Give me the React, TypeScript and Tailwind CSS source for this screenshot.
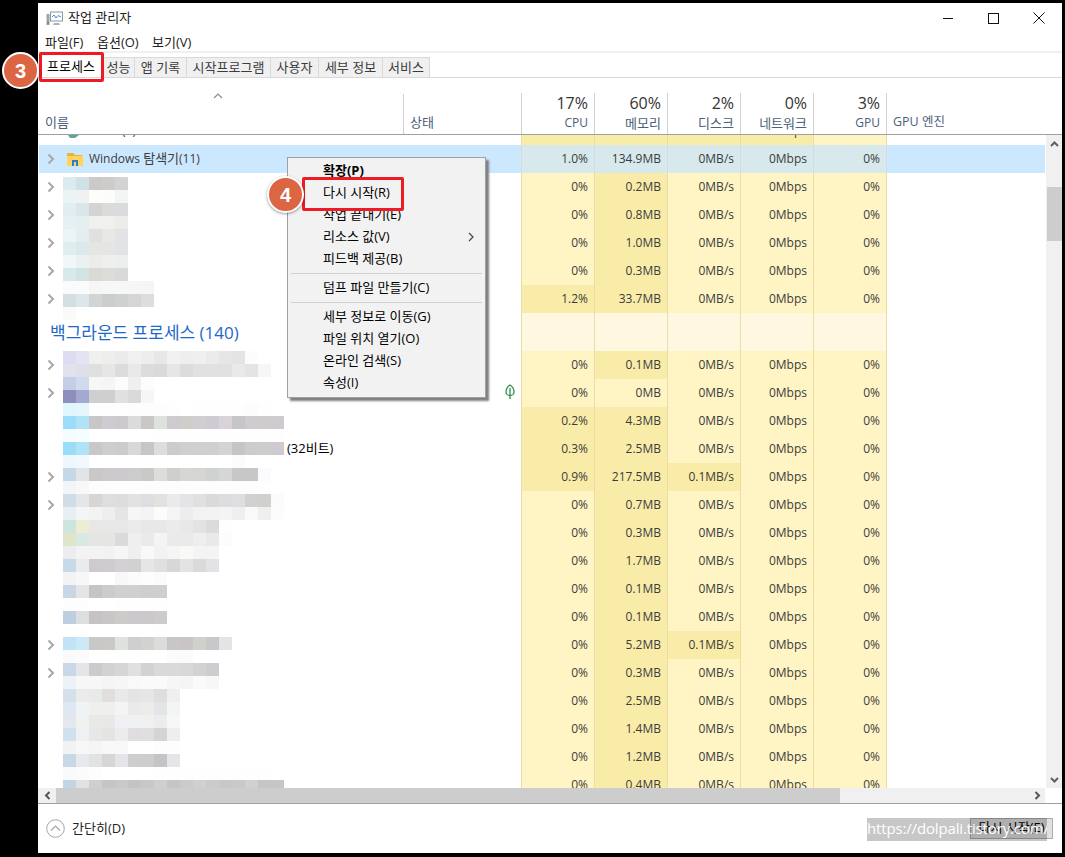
import React from "react";

type Row = {
  cpu: string;
  mem: string;
  disk?: string;
  arrow?: boolean;
  hotCpu?: boolean;
  hotDisk?: boolean;
  note?: string;
};

const topRows: Row[] = [
  { cpu: "0%", mem: "0.2MB", arrow: true },
  { cpu: "0%", mem: "0.8MB", arrow: true },
  { cpu: "0%", mem: "1.0MB", arrow: true },
  { cpu: "0%", mem: "0.3MB", arrow: true },
  { cpu: "1.2%", mem: "33.7MB", arrow: true, hotCpu: true },
];

const bgRows: Row[] = [
  { cpu: "0%", mem: "0.1MB", arrow: true },
  { cpu: "0%", mem: "0MB", arrow: true },
  { cpu: "0.2%", mem: "4.3MB", hotCpu: true },
  { cpu: "0.3%", mem: "2.5MB", hotCpu: true, note: "(32비트)" },
  { cpu: "0.9%", mem: "217.5MB", disk: "0.1MB/s", arrow: true, hotCpu: true, hotDisk: true },
  { cpu: "0%", mem: "0.7MB", arrow: true },
  { cpu: "0%", mem: "0.3MB" },
  { cpu: "0%", mem: "1.7MB" },
  { cpu: "0%", mem: "0.1MB" },
  { cpu: "0%", mem: "0.1MB" },
  { cpu: "0%", mem: "5.2MB", disk: "0.1MB/s", arrow: true, hotDisk: true },
  { cpu: "0%", mem: "0.3MB", arrow: true },
  { cpu: "0%", mem: "2.5MB" },
  { cpu: "0%", mem: "1.4MB" },
  { cpu: "0%", mem: "1.2MB" },
  { cpu: "0%", mem: "0.4MB" },
];

// 가려진 프로세스 이름 (모자이크)
const mosaicTop = [
  "#dcebef #cfe2e6 #cbcac8 #cdccc9 #d2d3d5",
  "#ebf4f4 #eff2f1 #fdfdfc #fcfcfa #f3f5f4",
  "#e0eef1 #d9e7e9 #d4d4d4 #dcdbd8 #dadbdd",
  "#e4f1f3 #e5efed #f0f0ee #f0f1ef #ecedeb",
  "#ebf4f6 #e4eef0 #e0e0e0 #e8e8e5 #e2e3e6",
  "#deeeee #dde8ea #e5e5e2 #e5e5e3 #e2e3e5",
  "#f1f7f7 #ebf1f3 #ecece9 #efefee #edeef0",
  "#d8e9ec #d2e3e3 #dad9d6 #dcdcd9 #d8d9db",
  "#fbfbfb #fbfbfb #f6f6f6 #f7f7f7 #f7f7f7 #f6f6f6 #f5f5f5",
  "#d5dee0 #dde6ea #d2d5d5 #cbcccc #cfd0d0 #d4d5d5 #dcdddc",
  "#fafafa",
];

const mosaicBottom = [
  "#dcdcf2 #e3e3f3 #f0f0ee #eeeeec #ebebeb #f0f0f0 #ededed #e7e7e7 #f1f1f1 #eeeeee #f0f0f0 #ebebeb #e6e6e6 #e4e4e2 #fbfcfb",
  "#e2e2ec #dfdfe9 #dfdfdf #e6e6e4 #dcdcdc #e9e9e9 #dcdcdc #dadada #e6e6e6 #dcdcdf #e1e1e1 #e0e1e0 #e0e2e2 #e9e9e9 #e4e4e2 #f6f6f6",
  "#c2cfe4 #cfdbea #f7f7f7 #f5f5f5 #fcfcfc #efefef #fcfcfc",
  "#8e8fbd #a5a9d1 #d0cfcf #cfcfd1 #dfe0df #dadad9 #f6f6f6",
  "#e0f6fd #e5f7fd #fefefe #fefefe #fefefe #fdfdfd #fdfdfd #fdfdfd #fefefe #ffffff #fefefe #fefefe #fefefe #fefefe #fcfcfc #fefefe",
  "#9bdcf8 #aee4f6 #c9c6c8 #cfcbd0 #cdc9cc #dcdbdb #c9c8c5 #dfe1df #cecacf #cfcecb #d0ced0 #cfcbd3 #d7d3d6 #c6c5c8 #cfcbd0 #cecccc #cfcacf",
  "#f3fcff #f6fdff #ffffff #ffffff #ffffff #ffffff #ffffff #fefefe #fefefe #fefefe #fefefe #fefefe #fefefe #fefefe #fefefe #fefefe #fefefe",
  "#9bdcf8 #aee4f6 #c9c7c8 #cfcdd0 #cecbcd #d9d8d8 #c8c6c4 #dcdedc #cecbcf #d0cfcc #d1cfd1 #d1ced2 #d6d4d2 #c6c5c6 #cfcbcd #cecccc #cfcacf",
  "#edf7fd #f2f9fe #ffffff #ffffff #ffffff #ffffff #ffffff #ffffff #ffffff #ffffff #ffffff #ffffff #ffffff #fcfcfc",
  "#c6d7e5 #e3e4e6 #cbc9c8 #cccacb #cccacc #cdcbcc #c9c9c8 #dddddc #cfcfce #d6d6d5 #d5d6d4 #cfd2d1 #d5d6d7 #c7c7c7 #c7c7c7 #fafbfd",
  "#f3f6f8 #f7f8f8 #fdfdfd #fdfdfd #fdfdfd #fdfdfd #fdfdfd #fdfdfd #fdfdfd #fdfdfd #fdfdfd #fdfdfd #fdfdfd #fdfdfd #fdfdfd #fefefe",
  "#cfdde8 #e4e6e8 #d8d5d5 #dfdede #dddddc #e3e1e1 #dcdee1 #e2e2df #eaeaea #e2e4e8 #e2dfdf #dcd9d9 #dddde0 #dcdee0 #d2d1d0 #d0d0cd #fafbfd",
  "#e7eef4 #f3f6f6 #f3f3f3 #eeeeee #e5e5e5 #f6f6f6 #f4f4f4 #fcfcfc #f5f5f5 #ededed #f2f2f2 #f2f3f3 #f3f4f3 #efefef #f9f9f9 #efefed #fcfcfc",
  "#cde5de #ecedd2 #e8e7e5 #e7e7e6 #e7e7e6 #ebebeb #e7e8e7 #e8e8e8 #ebebeb #e8e8e8 #e3e3e3 #dbdbdb #fdfefd",
  "#dfe5cb #d8e9e4 #e5e5e5 #e5e5e3 #dadada #efeff1 #e9ebea #f4f4f4 #eaeaea #e9ebea #eeeeee #e9e9e9 #fcfcfc",
  "#ebedef #f3f3f3 #f3f3f3 #f2f2f2 #f6f6f6 #efefef #f9f9f9 #f2f2f2 #f4f6f5 #f9f9f6 #f4f4f4 #f4f4f4",
  "#c8dae9 #e9ebee #cecbce #cfcccf #d3d1d3 #d2d1d2 #e6e6e6 #e0e0e0 #d8d6d8 #e3e3e3 #dadada #e2e3e6",
  "#f3f3f3 #f7f7f7 #ffffff #ffffff #f8f8f8 #fbfbfb #fdfdfd #fbfbfb",
  "#c7d7e4 #e3e5e8 #c7c4c5 #cdcbcb #d2cfd0 #d1cfd2 #cfcdcf #d0ced2",
  "#fdfdfd #fdfdfd #ffffff #ffffff #fefefe #fefefe #fefefe #fefefe",
  "#bccee0 #dcdee0 #c6c3c4 #c9c7c6 #cdcaca #cbc9cb #cbc9cb #cdcbcb",
  "#ffffff #ffffff #ffffff #ffffff #ffffff #ffffff #ffffff #fefefe",
  "#c2e3f5 #cde9f6 #cac8c6 #cbc8c8 #dee2df #cdd0cf #d2d2d0 #dcdcd8 #c7c7c7 #c8c4c8 #d1d0cc #c8c8cb #e4e4e6",
  "#fafafa #fbfbfb #ffffff #ffffff #ffffff #ffffff #ffffff #ffffff #fbfbfb #fbfbfb",
  "#c8d8e6 #e3e5e9 #cdcacb #d4d1d5 #d7d6d7 #e0e0e0 #d2d2d4 #d9d9d9 #d9d9d9 #d9d8d6 #d2d2d2 #cccdd0",
  "#edf2f6 #f6f7f7 #f7f7f7 #f5f5f5 #f6f6f6 #f9f9f9 #fafafa #fafafa #f6f6f4 #f4f6f6 #fafafa #f7f7f7",
  "#d6e0ea #ebebeb #e8eaea #e0dfdd #e9e9e9 #e6e3e5 #e6e6e6 #dedede #eef0ef",
  "#dee8f2 #f0f3f5 #efefed #efefed #f4f4f4 #eaeaea #ecece9 #e3e4e7 #f3f5f4",
  "#e2e8ed #f0f2f0 #e9e9e9 #e8e9e6 #eff0f3 #eff0f2 #f0f0f0 #ececec #f7f7f7",
  "#cfe0ee #eef0f3 #e7e7e7 #e4e4e2 #ececec #dfdde0 #dfdfdf #d4d4d4 #ecefee",
  "#f2f2f2 #f7f7f7 #f5f5f3 #f8f8f8 #f8f8f8 #ffffff #ffffff #fdfdfd #fdfdfd",
  "#c8d8e6 #e7e9ed #e0e3e1 #d6d6d4 #e4e5ea #cfcdd0 #cdcdcd #c4c4c6 #e3e5e7",
  "#fafafa #fbfbfb #fdfdfd #ffffff #ffffff #ffffff #ffffff #fefefe #fefefe #fefefe #fefefe #fefefe #fefefe #fefefe #fefefe #fefefe",
  "#c3d4e2 #dfe3e2 #cfcfcf #c5c5c7 #c9c9c9 #c4c4c4 #c8c8cb #d0cfca #c5c5c7 #cbcbcb #cfd0d3 #cdc9cd #c9c8c8 #c9c9c9 #cfd0d2 #c6c6c6 #c6c6c6",
];

const tabs = [
  { label: "성능", w: "w-[32px]" },
  { label: "앱 기록", w: "w-[52px]" },
  { label: "시작프로그램", w: "w-[84px]" },
  { label: "사용자", w: "w-[48px]" },
  { label: "세부 정보", w: "w-[64px]" },
  { label: "서비스", w: "w-[47px]" },
];

const headCols = [
  { pct: "17%", label: "CPU", size: "text-[12px]" },
  { pct: "60%", label: "메모리", size: "text-[13px]" },
  { pct: "2%", label: "디스크", size: "text-[13px]" },
  { pct: "0%", label: "네트워크", size: "text-[13px]" },
  { pct: "3%", label: "GPU", size: "text-[12px]" },
];

const Chevron = () => (
  <svg width="8" height="12" viewBox="0 0 8 12" className="shrink-0">
    <path d="M1.5 1.5 L6 6 L1.5 10.5" fill="none" stroke="#a8a8a8" strokeWidth="2" />
  </svg>
);

const Mosaic = ({ rows, className }: { rows: string[]; className: string }) => (
  <div className={`absolute left-[25px] flex flex-col ${className}`}>
    {rows.map((row, i) => (
      <div key={i} className="flex h-[13px]">
        {row.split(" ").map((c, j) => (
          <div key={j} className="w-[13px] h-[13px]" style={{ backgroundColor: c }} />
        ))}
      </div>
    ))}
  </div>
);

const Cell = ({ text, hot, first }: { text: string; hot?: boolean; first?: boolean }) => (
  <div
    className={`${first ? "w-[74px] border-l" : "w-[73px]"} border-r border-[#eedca6] flex items-center justify-end pr-[6px] ${
      hot ? "bg-[#f9eca8]" : "bg-[#fff4c4]"
    }`}
  >
    {text}
  </div>
);

const ProcRow = ({ row }: { row: Row }) => (
  <div className="flex h-7 shrink-0">
    <div className="w-[482px] flex items-center pl-[8px] relative">
      {row.arrow && <Chevron />}
      {row.note && <span className="absolute left-[248px] text-[13px] text-black">{row.note}</span>}
    </div>
    <Cell first text={row.cpu} hot={row.hotCpu} />
    <Cell text={row.mem} hot={row.mem !== "0MB"} />
    <Cell text={row.disk ?? "0MB/s"} hot={row.hotDisk} />
    <Cell text="0Mbps" />
    <Cell text="0%" />
  </div>
);

const MenuItem = ({ label, bold, more }: { label: string; bold?: boolean; more?: boolean }) => (
  <div className={`h-[22px] flex items-center pl-[35px] pr-[11px] justify-between ${bold ? "font-bold" : ""}`}>
    <span>{label}</span>
    {more && (
      <svg width="6" height="10" viewBox="0 0 6 10">
        <path d="M1 1 L5 5 L1 9" fill="none" stroke="#444" strokeWidth="1.2" />
      </svg>
    )}
  </div>
);

const MenuLine = () => <div className="h-px bg-[#d0d0d0] mx-[3px] my-[3px]" />;

const Badge = ({ n, className }: { n: string; className: string }) => (
  <div
    className={`absolute w-[37px] h-[37px] rounded-full bg-[#dc6644] border-[2px] border-white shadow-[0_1px_3px_#00000066] flex items-center justify-center text-white text-[20px] font-bold font-['Liberation_Sans',sans-serif] ${className}`}
  >
    {n}
  </div>
);

export default function App() {
  return (
    <div className="relative w-[1065px] h-[857px] overflow-hidden bg-black pt-[3px] pl-[38px] pr-[3px] pb-[4px] text-[12px] text-[#3c3c3c] font-['Open_Sans','Noto_Sans_CJK_KR',sans-serif]">
      <div className="h-full bg-white flex flex-col overflow-hidden">
        {/* 제목 표시줄 */}
        <div className="h-[29px] shrink-0 flex items-center pl-[8px] pt-[1px] text-[#222]">
          <svg width="17" height="15" viewBox="0 0 17 15" className="shrink-0">
            <rect x="0.5" y="3" width="3" height="11" fill="#9aa5a5" />
            <rect x="1" y="11" width="2" height="1.5" fill="#5a9a3c" />
            <rect x="4.5" y="1" width="12" height="9" fill="#fff" stroke="#8a96a0" />
            <path d="M6 6 L8 4 L10 7 L12 4.5 L15 6" fill="none" stroke="#3f93d2" strokeWidth="1" />
            <path d="M8 12 H13 L14 14 H7 Z" fill="#a8b2b8" />
          </svg>
          <span className="ml-[5px] text-[13px]">작업 관리자</span>
          <div className="ml-auto flex items-center">
            <svg width="11" height="11" viewBox="0 0 11 11" className="mr-[34px]">
              <path d="M0 5.5 H10" stroke="#111" />
            </svg>
            <svg width="11" height="11" viewBox="0 0 11 11" className="mr-[34px]">
              <rect x="0.5" y="0.5" width="10" height="10" fill="none" stroke="#111" />
            </svg>
            <svg width="12" height="12" viewBox="0 0 12 12" className="mr-[17px]">
              <path d="M0.5 0.5 L11.5 11.5 M11.5 0.5 L0.5 11.5" stroke="#111" />
            </svg>
          </div>
        </div>

        {/* 메뉴 */}
        <div className="h-[19px] shrink-0 flex items-center pl-[7px] pt-[3px] text-[13px] text-[#222]">
          <span className="w-[52px]">파일(F)</span>
          <span className="w-[55px]">옵션(O)</span>
          <span>보기(V)</span>
        </div>
        <div className="h-[2px] shrink-0 bg-[#f0f0f0]" />

        {/* 탭 */}
        <div className="h-[25px] shrink-0 pt-[4px] flex items-stretch border-b border-[#d9d9d9] pl-[1px] text-[13px]">
          <div className="w-[64px] bg-white flex items-center justify-center text-black">프로세스</div>
          {tabs.map((t) => (
            <div
              key={t.label}
              className={`${t.w} bg-[#f0f0f0] border-t border-r border-[#d9d9d9] flex items-center justify-center`}
            >
              {t.label}
            </div>
          ))}
        </div>

        {/* 표 머리글 */}
        <div className="h-[57px] shrink-0 flex border-b border-[#a0a0a0] pl-px pr-[16px] text-[#4c607a]">
          <div className="w-[364px] relative pt-[35px] pl-[6px] text-[13px]">
            <svg width="10" height="6" viewBox="0 0 10 6" className="absolute left-[174px] top-[15px]">
              <path d="M1 5 L5 1 L9 5" fill="none" stroke="#8c8c8c" strokeWidth="1.2" />
            </svg>
            이름
          </div>
          <div className="w-[118px] mt-[16px] border-l border-[#d0d0d0] pl-[6px] pt-[19px] text-[13px]">상태</div>
          {headCols.map((c, i) => (
            <div
              key={c.label}
              className={`${i === 0 ? "w-[74px] border-l" : "w-[73px]"} mt-[15px] border-r border-[#d0d0d0] flex flex-col items-end pr-[6px]`}
            >
              <span className="text-[16px] leading-[20px] text-[#333]">{c.pct}</span>
              <span className={`${c.size} leading-[18px] mt-[1px]`}>{c.label}</span>
            </div>
          ))}
          <div className="flex-1 pl-[6px] pt-[35px] text-[12.5px]">GPU 엔진</div>
        </div>

        {/* 표 본문 */}
        <div className="flex-1 min-h-0 flex">
          <div className="flex-1 min-w-0 relative overflow-hidden pl-px">
            <div className="flex h-7 -mt-[18px] relative">
              <div className="w-[482px] relative">
                <span className="absolute left-[83px] top-[5px]">(4)</span>
              </div>
              <Cell first text="0%" hot />
              <Cell text="51.3MB" hot />
              <Cell text="0MB/s" hot />
              <Cell text="0Mbps" hot />
              <Cell text="0%" />
            </div>
            <svg width="14" height="3" viewBox="0 0 14 3" className="absolute left-[29px] top-0">
              <path d="M1 0 H12 L8 3 H3 Z" fill="#5aa7a0" />
            </svg>

            {/* Windows 탐색기 선택 행 */}
            <div className="flex h-7 bg-[#cce8ff] w-[1006px]">
              <div className="w-[482px] flex items-center pl-[8px]">
                <Chevron />
                <svg width="16" height="14" viewBox="0 0 16 14" className="ml-[12px] shrink-0">
                  <path d="M0 1 H6 L8 3 H15 V5 H0 Z" fill="#e8b33a" />
                  <path d="M0 4 H16 V14 H0 Z" fill="#ffd35c" />
                  <path d="M5 14 V8 H11 V14 H9 V10 H7 V14 Z" fill="#2b7cd3" />
                </svg>
                <span className="ml-[6px] whitespace-pre">
                  Windows <span className="text-[13px]">탐색기</span>(11)
                </span>
              </div>
              {["1.0%", "134.9MB", "0MB/s", "0Mbps", "0%"].map((t, i) => (
                <div
                  key={t}
                  className={`${i === 0 ? "w-[74px] border-l" : "w-[73px]"} border-r border-[#cfdfe0] bg-[#d7e9ec] flex items-center justify-end pr-[6px]`}
                >
                  {t}
                </div>
              ))}
            </div>

            {topRows.map((r, i) => (
              <ProcRow key={i} row={r} />
            ))}

            {/* 백그라운드 프로세스 그룹 */}
            <div className="flex h-[38px] shrink-0">
              <div className="w-[482px] flex items-center pl-[11px] pt-[2px] text-[17px] text-[#1e69c8]">
                백그라운드 프로세스 (140)
              </div>
              {[0, 1, 2, 3, 4].map((i) => (
                <div
                  key={i}
                  className={`${i === 0 ? "w-[74px] border-l" : "w-[73px]"} border-r border-[#eedca6] bg-[#fff7e0]`}
                />
              ))}
            </div>

            {bgRows.map((r, i) => (
              <ProcRow key={i} row={r} />
            ))}

            <Mosaic rows={mosaicTop} className="top-[42px]" />
            <Mosaic rows={mosaicBottom} className="top-[216px]" />

            <svg width="12" height="16" viewBox="0 0 12 16" className="absolute left-[466px] top-[249px]">
              <path d="M6 1 C9 3 10 6 10 8 C10 10 8 11.5 6 11.5 C4 11.5 2 10 2 8 C2 6 3 3 6 1 Z M6 4 V15" fill="none" stroke="#2f8f4e" strokeWidth="1.3" />
            </svg>
          </div>

          {/* 세로 스크롤바 */}
          <div className="w-[16px] shrink-0 bg-[#f0f0f0] flex flex-col items-center pl-px">
            <div className="h-[17px] flex items-center justify-center">
              <svg width="9" height="6" viewBox="0 0 9 6">
                <path d="M1 5 L4.5 1.5 L8 5" fill="none" stroke="#606060" strokeWidth="2" />
              </svg>
            </div>
            <div className="w-full h-[54px] mt-[35px] bg-[#cdcdcd]" />
            <div className="mt-auto h-[17px] flex items-center justify-center">
              <svg width="9" height="6" viewBox="0 0 9 6">
                <path d="M1 1 L4.5 4.5 L8 1" fill="none" stroke="#606060" strokeWidth="2" />
              </svg>
            </div>
          </div>
        </div>

        {/* 가로 스크롤바 */}
        <div className="h-[15px] shrink-0 flex">
          <div className="w-[18px] bg-[#f0f0f0] flex items-center justify-center">
            <svg width="7" height="9" viewBox="0 0 7 9">
              <path d="M5.5 1 L2 4.5 L5.5 8" fill="none" stroke="#555" strokeWidth="2" />
            </svg>
          </div>
          <div className="w-[784px] bg-[#cdcdcd]" />
          <div className="w-[205px] bg-[#f0f0f0] flex items-center justify-end pr-[4px]">
            <svg width="7" height="9" viewBox="0 0 7 9">
              <path d="M1.5 1 L5 4.5 L1.5 8" fill="none" stroke="#555" strokeWidth="2" />
            </svg>
          </div>
        </div>

        {/* 바닥글 */}
        <div className="h-[50px] shrink-0 border-t border-[#a0a0a0] flex items-center pl-[8px] pr-[9px] text-[13px] text-[#222]">
          <svg width="19" height="19" viewBox="0 0 19 19" className="shrink-0">
            <circle cx="9.5" cy="9.5" r="8.8" fill="none" stroke="#a5a5a5" />
            <path d="M5 11.5 L9.5 7 L14 11.5" fill="none" stroke="#a5a5a5" strokeWidth="1.2" />
          </svg>
          <span className="ml-[7px]">간단히(D)</span>
          <div className="ml-auto w-[83px] h-[21px] -mt-[1px] bg-[#e1e1e1] border border-[#adadad] flex items-center justify-center text-black">
            다시 시작(E)
          </div>
        </div>
      </div>

      {/* 컨텍스트 메뉴 */}
      <div className="absolute left-[287px] top-[157px] w-[199px] h-[241px] bg-[#f2f2f2] border border-[#a0a0a0] shadow-[3px_3px_2px_#7f7f7f] py-[2px] text-[13px] text-black">
        <MenuItem label="확장(P)" bold />
        <MenuItem label="다시 시작(R)" />
        <MenuItem label="작업 끝내기(E)" />
        <MenuItem label="리소스 값(V)" more />
        <MenuItem label="피드백 제공(B)" />
        <MenuLine />
        <MenuItem label="덤프 파일 만들기(C)" />
        <MenuLine />
        <MenuItem label="세부 정보로 이동(G)" />
        <MenuItem label="파일 위치 열기(O)" />
        <MenuItem label="온라인 검색(S)" />
        <MenuItem label="속성(I)" />
      </div>

      {/* 주석 표시 */}
      <div className="absolute left-[39px] top-[52px] w-[65px] h-[30px] border-[3px] border-[#ed1c24] rounded-[2px]" />
      <div className="absolute left-[302px] top-[177px] w-[102px] h-[34px] border-[3px] border-[#ed1c24] rounded-[2px]" />
      <Badge n="3" className="left-[2px] top-[52px]" />
      <Badge n="4" className="left-[267px] top-[176px]" />

      {/* 워터마크 */}
      <div className="absolute left-[867px] top-[818px] w-[180px] h-[23px] bg-[#00000038] text-white text-[15px] leading-[21px] tracking-[-0.15px] whitespace-nowrap overflow-hidden">
        https://dolpali.tistory.com/
      </div>
    </div>
  );
}
